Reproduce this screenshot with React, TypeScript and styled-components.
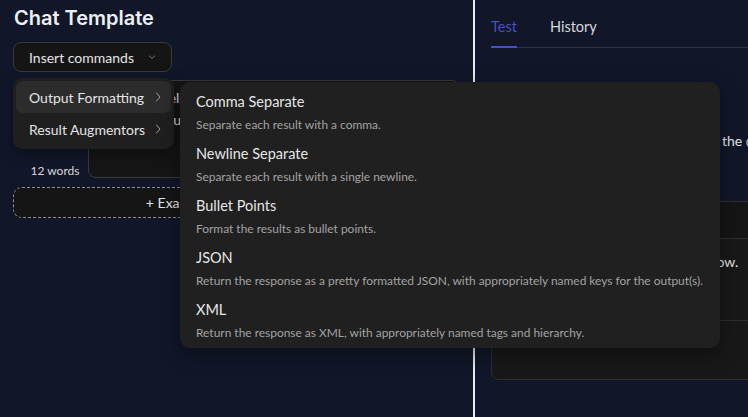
import styled, { createGlobalStyle } from 'styled-components'

const GlobalStyle = createGlobalStyle`
  html, body {
    margin: 0;
    padding: 0;
    background: #111729;
    font-family: Lato, "Noto Sans", sans-serif;
    color: #e6e6e6;
  }
`

interface Command {
  title: string
  description: string
}

const COMMANDS: Command[] = [
  { title: 'Comma Separate', description: 'Separate each result with a comma.' },
  {
    title: 'Newline Separate',
    description: 'Separate each result with a single newline.',
  },
  { title: 'Bullet Points', description: 'Format the results as bullet points.' },
  {
    title: 'JSON',
    description:
      'Return the response as a pretty formatted JSON, with appropriately named keys for the output(s).',
  },
  {
    title: 'XML',
    description:
      'Return the response as XML, with appropriately named tags and hierarchy.',
  },
]

const GROUPS = ['Output Formatting', 'Result Augmentors']

function Chevron({ dir }: { dir: 'down' | 'right' }) {
  const d = dir === 'down' ? 'M2 4.5l4 3.5 4-3.5' : 'M4.5 2l3.5 4-3.5 4'
  return (
    <svg width="12" height="12" viewBox="0 0 12 12" fill="none">
      <path d={d} stroke="#a0a0a0" strokeWidth="1" strokeLinecap="round" strokeLinejoin="round" />
    </svg>
  )
}

export default function App() {
  return (
    <Page>
      <GlobalStyle />
      <LeftPanel>
        <Title>Chat Template</Title>
        <InsertButton>
          Insert commands
          <Chevron dir="down" />
        </InsertButton>
        <MessageRow>
          <RoleColumn>
            <RoleLabel>System</RoleLabel>
            <WordCount>12 words</WordCount>
          </RoleColumn>
          <MessageBox>
            You are a helpful assistant who
            <br />
            answers a question about a topic.
          </MessageBox>
        </MessageRow>
        <AddButton>+ Example message exchange</AddButton>
      </LeftPanel>
      <Divider />
      <RightPanel>
        <TabBar>
          <Tab $active>Test</Tab>
          <Tab>History</Tab>
        </TabBar>
        <Hint>Enter test values for variables used in the @</Hint>
        <ResultBox>
          <ResultHeader>Output</ResultHeader>
          <ResultBody>The model's output will appear below.</ResultBody>
          <ResultFooter />
        </ResultBox>
      </RightPanel>

      <GroupMenu>
        {GROUPS.map((g, i) => (
          <GroupItem key={g} $active={i === 0}>
            {g}
            <Chevron dir="right" />
          </GroupItem>
        ))}
      </GroupMenu>

      <CommandMenu>
        {COMMANDS.map((c) => (
          <CommandItem key={c.title}>
            <CommandTitle>{c.title}</CommandTitle>
            <CommandDesc>{c.description}</CommandDesc>
          </CommandItem>
        ))}
      </CommandMenu>
    </Page>
  )
}

const Page = styled.div`
  position: relative;
  width: 748px;
  height: 417px;
  overflow: hidden;
  display: grid;
  grid-template-columns: 473px 2px 1fr;
`

const LeftPanel = styled.div`
  padding: 4px 13px 0 13px;
  display: flex;
  flex-direction: column;
`

const Title = styled.h1`
  margin: 0 0 0 1px;
  font-family: Inter, "Noto Sans", sans-serif;
  font-size: 20px;
  font-weight: 600;
  line-height: 28px;
  color: #eceef2;
`

const InsertButton = styled.div`
  margin-top: 10px;
  align-self: flex-start;
  width: 159px;
  height: 30px;
  box-sizing: border-box;
  display: flex;
  align-items: center;
  gap: 14px;
  padding: 0 15px;
  white-space: nowrap;
  background: #151515;
  border: 1px solid #3a3a3a;
  border-radius: 8px;
  font-size: 14px;
  color: #e4e4e4;
`

const MessageRow = styled.div`
  margin-top: 8px;
  display: flex;
  height: 98px;
`

const RoleColumn = styled.div`
  width: 75px;
  display: flex;
  flex-direction: column;
  justify-content: space-between;
  align-items: center;
  padding: 6px 0 0;
  box-sizing: border-box;
`

const RoleLabel = styled.div`
  font-size: 13px;
  color: #cfcfcf;
`

const WordCount = styled.div`
  font-size: 12px;
  line-height: 16px;
  color: #d8d8d8;
  margin-bottom: -1px;
  padding-left: 9px;
`

const MessageBox = styled.div`
  flex: 1;
  box-sizing: border-box;
  padding: 6px 12px;
  background: #151515;
  border: 1px solid #3a3a3a;
  border-radius: 8px;
  font-size: 14px;
  line-height: 22px;
  color: #e4e4e4;
  white-space: nowrap;
  overflow: hidden;
`

const AddButton = styled.div`
  margin-top: 9px;
  height: 31px;
  box-sizing: border-box;
  display: flex;
  align-items: center;
  justify-content: center;
  background: #151515;
  border: 1px dashed #8a8f99;
  border-radius: 9px;
  font-size: 14px;
  color: #e4e4e4;
`

const Divider = styled.div`
  background: #e8e9ec;
`

const RightPanel = styled.div`
  padding-left: 16px;
  display: flex;
  flex-direction: column;
  min-width: 0;
`

const TabBar = styled.div`
  display: flex;
  gap: 33px;
  width: 400px;
  padding-top: 17px;
  border-bottom: 1px solid #2b3142;
`

const Tab = styled.div<{ $active?: boolean }>`
  font-size: 14.5px;
  line-height: 20px;
  padding-bottom: 9px;
  margin-bottom: -1px;
  color: ${(p) => (p.$active ? '#4a4fc4' : '#d6d8de')};
  border-bottom: 2px solid ${(p) => (p.$active ? '#4a4fc4' : 'transparent')};
`

const Hint = styled.div`
  margin-top: 83px;
  width: 400px;
  font-size: 14px;
  line-height: 20px;
  color: #e4e4e4;
  white-space: nowrap;
`

const ResultBox = styled.div`
  margin-top: 50px;
  width: 400px;
  height: 177px;
  display: flex;
  flex-direction: column;
  background: #181818;
  border: 1px solid #2e2e2e;
  border-radius: 8px;
  overflow: hidden;
`

const ResultHeader = styled.div`
  height: 37px;
  box-sizing: border-box;
  padding: 0 14px;
  display: flex;
  align-items: center;
  font-size: 13px;
  color: #9a9a9a;
  background: #151515;
  border-bottom: 1px solid #2e2e2e;
`

const ResultBody = styled.div`
  height: 82px;
  box-sizing: border-box;
  padding: 13px 14px 0;
  font-size: 14px;
  line-height: 20px;
  color: #e4e4e4;
  white-space: nowrap;
  border-bottom: 1px solid #2e2e2e;
`

const ResultFooter = styled.div`
  flex: 1;
`

const GroupMenu = styled.div`
  position: absolute;
  left: 13px;
  top: 78px;
  width: 161px;
  box-sizing: border-box;
  padding: 3px 3px 4px;
  background: #1f1f1f;
  border-radius: 9px;
  box-shadow: 0 4px 14px rgba(0, 0, 0, 0.35);
`

const GroupItem = styled.div<{ $active?: boolean }>`
  height: 32px;
  padding: 0 7px 0 13px;
  display: flex;
  align-items: center;
  justify-content: space-between;
  border-radius: 7px;
  font-size: 14px;
  color: #e4e4e4;
  background: ${(p) => (p.$active ? '#2c2c2c' : 'transparent')};
`

const CommandMenu = styled.div`
  position: absolute;
  left: 180px;
  top: 82px;
  width: 540px;
  box-sizing: border-box;
  padding-bottom: 6px;
  background: #202020;
  border-radius: 10px;
  box-shadow: 0 6px 20px rgba(0, 0, 0, 0.4);
`

const CommandItem = styled.div`
  padding: 10px 16px 1px;
`

const CommandTitle = styled.div`
  font-size: 14.5px;
  line-height: 20px;
  color: #e6e6e6;
`

const CommandDesc = styled.div`
  margin-top: 5px;
  font-size: 11.95px;
  line-height: 16px;
  color: #a3a3a3;
  white-space: nowrap;
`
